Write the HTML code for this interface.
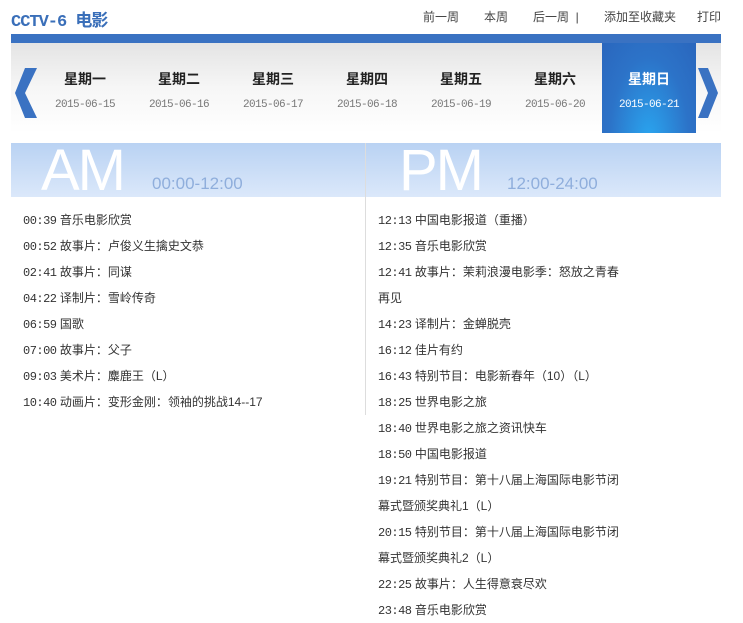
<!DOCTYPE html>
<html><head><meta charset="utf-8"><style>
*{margin:0;padding:0;box-sizing:border-box}
body{width:743px;height:619px;overflow:hidden;background:#fff;font-family:"Liberation Sans","Noto Sans CJK SC",sans-serif;position:relative;color:#333}
.title{position:absolute;left:11px;top:6px;font:bold 17px "Liberation Mono","Noto Sans CJK SC",monospace;color:#3a6fb9;letter-spacing:-1px}
.nav{position:absolute;top:8px;font-size:12px;color:#444}
.bar{position:absolute;left:11px;top:34px;width:710px;height:9px;background:#3a72c2}
.week{position:absolute;left:11px;top:43px;width:710px;height:90px;background:linear-gradient(#e4e4e4,#f6f6f6 50%,#fff)}
.day{position:absolute;top:43px;width:94px;height:90px;text-align:center}
.day b{display:block;margin-top:27px;font-size:14px;line-height:18px;color:#222}
.day span{display:block;margin-top:10px;font-size:11px;line-height:14px;color:#777;font-family:"Liberation Mono",monospace;letter-spacing:-0.6px}
.act{background:radial-gradient(ellipse at 50% 110%,#2aa6f0,#2c73c8 60%,#2a66bd)}
.act b,.act span{color:#fff}
.hd{position:absolute;top:143px;height:54px;background:linear-gradient(#b9d2f3,#dbe8fa)}
.big{position:absolute;top:-6px;font-size:58px;color:#fff;letter-spacing:-2px}
.rng{position:absolute;top:31px;font-size:17px;color:#8faedc}
.vl{position:absolute;left:365px;top:143px;width:1px;height:272px;background:#ddd}
.list{position:absolute;top:207px;font-size:12px;color:#333}
.list div{height:26px;line-height:26px;overflow:hidden;white-space:nowrap}
.t{font-family:"Liberation Mono",monospace;letter-spacing:-0.5px}
</style></head><body>
<div class="title">CCTV-6 电影</div>
<div class="nav" style="left:423px">前一周</div>
<div class="nav" style="left:484px">本周</div>
<div class="nav" style="left:533px">后一周 &nbsp;|</div>
<div class="nav" style="left:604px">添加至收藏夹</div>
<div class="nav" style="left:697px">打印</div>
<div class="bar"></div>
<div class="week"></div>
<svg style="position:absolute;left:15px;top:68px" width="24" height="50"><polygon points="10,0 22,0 10,25 22,50 10,50 0,25" fill="#3a72c2"/></svg>
<svg style="position:absolute;left:696px;top:68px" width="24" height="50"><polygon points="2,0 12,0 22,25 12,50 2,50 12,25" fill="#3a72c2"/></svg>
<div class="day" style="left:38px"><b>星期一</b><span>2015-06-15</span></div>
<div class="day" style="left:132px"><b>星期二</b><span>2015-06-16</span></div>
<div class="day" style="left:226px"><b>星期三</b><span>2015-06-17</span></div>
<div class="day" style="left:320px"><b>星期四</b><span>2015-06-18</span></div>
<div class="day" style="left:414px"><b>星期五</b><span>2015-06-19</span></div>
<div class="day" style="left:508px"><b>星期六</b><span>2015-06-20</span></div>
<div class="day act" style="left:602px"><b>星期日</b><span>2015-06-21</span></div>
<div class="hd" style="left:11px;width:354px"><div class="big" style="left:30px">AM</div><div class="rng" style="left:141px">00:00-12:00</div></div>
<div class="hd" style="left:366px;width:355px"><div class="big" style="left:33px">PM</div><div class="rng" style="left:141px">12:00-24:00</div></div>
<div class="vl"></div>
<div class="list" style="left:23px">
<div><span class="t">00:39</span> 音乐电影欣赏</div>
<div><span class="t">00:52</span> 故事片：卢俊义生擒史文恭</div>
<div><span class="t">02:41</span> 故事片：同谋</div>
<div><span class="t">04:22</span> 译制片：雪岭传奇</div>
<div><span class="t">06:59</span> 国歌</div>
<div><span class="t">07:00</span> 故事片：父子</div>
<div><span class="t">09:03</span> 美术片：麋鹿王（L）</div>
<div><span class="t">10:40</span> 动画片：变形金刚：领袖的挑战14--17</div>
</div>
<div class="list" style="left:378px">
<div><span class="t">12:13</span> 中国电影报道（重播）</div>
<div><span class="t">12:35</span> 音乐电影欣赏</div>
<div><span class="t">12:41</span> 故事片：茉莉浪漫电影季：怒放之青春</div>
<div>再见</div>
<div><span class="t">14:23</span> 译制片：金蝉脱壳</div>
<div><span class="t">16:12</span> 佳片有约</div>
<div><span class="t">16:43</span> 特别节目：电影新春年（10）（L）</div>
<div><span class="t">18:25</span> 世界电影之旅</div>
<div><span class="t">18:40</span> 世界电影之旅之资讯快车</div>
<div><span class="t">18:50</span> 中国电影报道</div>
<div><span class="t">19:21</span> 特别节目：第十八届上海国际电影节闭</div>
<div>幕式暨颁奖典礼1（L）</div>
<div><span class="t">20:15</span> 特别节目：第十八届上海国际电影节闭</div>
<div>幕式暨颁奖典礼2（L）</div>
<div><span class="t">22:25</span> 故事片：人生得意衰尽欢</div>
<div><span class="t">23:48</span> 音乐电影欣赏</div>
</div>
</body></html>
